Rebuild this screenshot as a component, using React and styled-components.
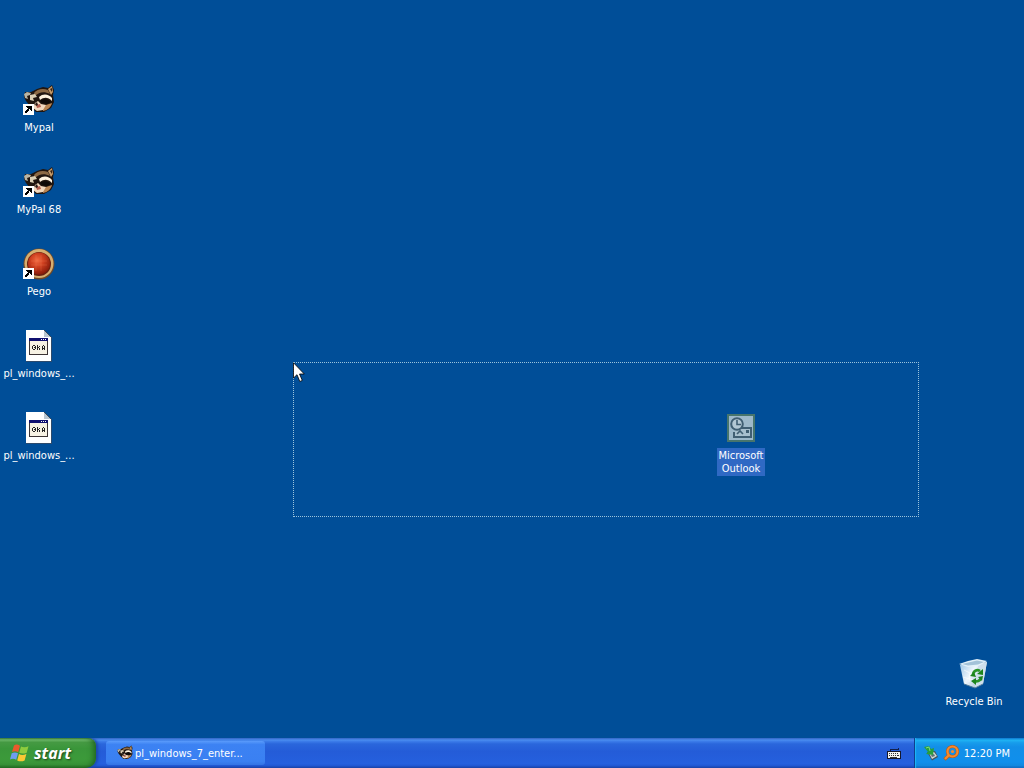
import React from 'react';
import styled, { createGlobalStyle } from 'styled-components';

const shortcuts = [
  { id: 1, label: 'Mypal', icon: Raccoon, linked: true },
  { id: 2, label: 'MyPal 68', icon: Raccoon, linked: true },
  { id: 3, label: 'Pego', icon: RedOrb, linked: true },
  { id: 4, label: 'pl_windows_...', icon: ImageFile },
  { id: 5, label: 'pl_windows_...', icon: ImageFile },
];

function App() {
  return (
    <Screen>
      <GlobalStyle />
      <Desktop>
        <IconColumn>
          {shortcuts.map(({ id, label, icon, linked }) => (
            <DesktopIcon key={id} label={label} icon={icon} linked={linked} />
          ))}
        </IconColumn>
        <OutlookSpot>
          <DesktopIcon label="Microsoft Outlook" icon={Outlook} selected />
        </OutlookSpot>
        <BinSpot>
          <DesktopIcon label="Recycle Bin" icon={RecycleBin} />
        </BinSpot>
        <Marquee />
        <PointerSpot>
          <Pointer />
        </PointerSpot>
      </Desktop>
      <Taskbar>
        <StartButton type="button">
          <Flag />
          start
        </StartButton>
        <Tasks>
          <TaskButton type="button">
            <Raccoon size={16} />
            pl_windows_7_enter...
          </TaskButton>
        </Tasks>
        <LanguageBar type="button" aria-label="Keyboard">
          <Keyboard />
        </LanguageBar>
        <Tray>
          <SafeRemove />
          <Magnifier />
          <Clock>12:20 PM</Clock>
        </Tray>
      </Taskbar>
    </Screen>
  );
}

function DesktopIcon({ label, icon: Icon, linked, selected }) {
  return (
    <Shortcut type="button">
      <IconBox>
        <Icon />
        {linked && <LinkArrow />}
      </IconBox>
      <Label $selected={selected}>{label}</Label>
    </Shortcut>
  );
}

function Raccoon({ size = 32 }) {
  return (
    <svg width={size} height={size} viewBox="0 0 32 32" aria-hidden="true">
      <path d="M1 13 L2 8 L8 8 L14 5 L20 3 L25 4 L29 1 L31 6 L30 11 L31 18 L28 24 L21 28 L13 28 L7 22 L3 17 Z" fill="#20150f" />
      <path d="M11 9 C14 5 20 4 25 6 L27 10 C21 7 16 8 12 12 Z" fill="#8d6a45" />
      <path d="M25 5 L29 2 L30 8 L28 11 Z" fill="#c79b68" />
      <path d="M27 5 L29 4 L29 8 Z" fill="#3a2416" />
      <path d="M1 10 L4 8 L8 9 L7 11 L4 12 L5 15 L2 14 Z" fill="#b9b4a4" />
      <path d="M7 11 L12 10 L14 13 L10 14 L11 17 L7 16 Z" fill="#dccfb4" />
      <path d="M16 13 C20 9 26 10 29 14 L29 17 C25 13 21 13 17 16 Z" fill="#fff3df" />
      <path d="M17 17 C21 14 26 15 28 18 L24 20 L19 19 Z" fill="#0d0907" />
      <path d="M20 22 L29 19 C28 23 25 26 20 27 Z" fill="#b88554" />
      <path d="M12 19 L15 17 L18 20 L23 21 L20 26 L14 27 L10 24 Z" fill="#f1d8bd" />
      <path d="M13 21 L17 20 L18 23 L14 24 Z" fill="#b55f50" />
      <path d="M12 20 L14 18 L15 21 L13 22 Z" fill="#2b1712" />
    </svg>
  );
}

function RedOrb() {
  return (
    <svg width="32" height="32" viewBox="0 0 32 32" aria-hidden="true">
      <defs>
        <radialGradient id="orb" cx="42%" cy="36%" r="65%">
          <stop offset="0" stopColor="#f26a42" />
          <stop offset="0.45" stopColor="#cf4020" />
          <stop offset="1" stopColor="#8a1c0a" />
        </radialGradient>
      </defs>
      <circle cx="16" cy="16" r="15.5" fill="#6f4a28" />
      <circle cx="16" cy="15.5" r="14.5" fill="#d6ae70" />
      <circle cx="16" cy="16" r="12" fill="#6a2010" />
      <circle cx="16" cy="15.5" r="11" fill="url(#orb)" />
      <path d="M8 13 H24 M8 17 H24 M13 7 V23 M18 7 V23" stroke="#f08058" strokeOpacity="0.25" />
    </svg>
  );
}

function ImageFile() {
  return (
    <svg width="32" height="32" viewBox="0 0 32 32" shapeRendering="crispEdges" aria-hidden="true">
      <path d="M3 0 H21 L28 7 V31 H3 Z" fill="#fff" />
      <path d="M3 31.5 H28.5 V7" fill="none" stroke="#2c4a6c" />
      <path d="M21 0 V7 H28 Z" fill="#b9c6d0" />
      <path d="M21 0 L28 7" stroke="#3a4a58" fill="none" />
      <rect x="6" y="8" width="19" height="17" fill="#3c3435" />
      <rect x="7" y="11" width="17" height="13" fill="#f7f2e4" />
      <rect x="6" y="8" width="19" height="3" fill="#101070" />
      <path d="M18 9h1v1h-1z M20 9h1v1h-1z M22 9h1v1h-1z" fill="#fff" />
      <path d="M10 15h2v1h-2z M9 16h1v3h-1z M12 16h1v3h-1z M10 19h2v1h-2z M11 17h1v1h-1z M14 15h1v5h-1z M15 17h1v1h-1z M16 16h1v1h-1z M16 18h1v2h-1z M20 15h1v1h-1z M19 16h1v4h-1z M21 16h1v4h-1z M20 18h1v1h-1z" fill="#222" />
    </svg>
  );
}

function Outlook() {
  return (
    <svg width="32" height="32" viewBox="0 0 32 32" aria-hidden="true">
      <rect x="2" y="2" width="28" height="28" fill="#47756d" />
      <rect x="4" y="4" width="24" height="24" fill="#9db9ca" />
      <path d="M16 16 H26 V25 H9 V20" fill="#a8c0ce" stroke="#405f73" strokeWidth="2" />
      <circle cx="12" cy="12" r="5.8" fill="#b3c8d4" stroke="#405f73" strokeWidth="2" />
      <path d="M12 8 V12.5 H16 M12 22 L15 19 L18 22" fill="none" stroke="#405f73" strokeWidth="1.6" />
      <rect x="21" y="18" width="3" height="3" fill="#405f73" />
    </svg>
  );
}

function RecycleBin() {
  return (
    <svg width="32" height="32" viewBox="0 0 32 32" aria-hidden="true">
      <defs>
        <linearGradient id="bin" x1="0" x2="1" y1="0" y2="0.6">
          <stop offset="0" stopColor="#9cc5e6" />
          <stop offset="0.5" stopColor="#eef6fc" />
          <stop offset="1" stopColor="#9db9d1" />
        </linearGradient>
      </defs>
      <path d="M2 7 L29 4 L25 26 L17 30 L6 26 Z" fill="url(#bin)" />
      <path d="M1 6 L10 3 L19 1 L29 3 L21 8 L10 9 Z" fill="#e3f1fa" />
      <path d="M4 6 L19 2.5 L26 4 L20 6.5 L10 7.5 Z" fill="#a3c2d8" />
      <path d="M20 8 L29 4 L25 26 L17 30 Z" fill="#cfdfec" />
      <path d="M6 12 L12 15 L11 24 M5 19 L15 22" stroke="#fff" strokeOpacity="0.6" fill="none" />
      <path d="M6 26 L17 30 L25 26" stroke="#4c7899" fill="none" />
      <g fill="none" stroke="#2a9428" strokeWidth="2.6">
        <path d="M15 17 C15 13 19 11 22 13" />
        <path d="M23 20 C22 23 19 24 16 23" />
      </g>
      <path d="M19 16 L25 11 L25 17 Z M12 18 L16 14 L18 19 Z M18 20 L18 27 L13 23 Z M20 19 L25 18 L24 23 Z" fill="#1c841c" />
    </svg>
  );
}

function LinkArrow() {
  return (
    <Overlay width="11" height="11" viewBox="0 0 11 11" shapeRendering="crispEdges" aria-hidden="true">
      <rect width="11" height="11" fill="#fff" />
      <path d="M4 2h5v5h-1v-1h-1v-1h-1v1h-1v1h-1v2h-2v-2h1v-1h1v-1h1v-1h-1v-1h-1v-1z" fill="#000" />
      <path d="M5 3h3v3h-1v-1h-1v-1h-1z M4 5h2v2h-1v1h-1z" fill="#000" />
    </Overlay>
  );
}

function Pointer() {
  return (
    <svg width="12" height="21" viewBox="0 0 12 21" aria-hidden="true">
      <path d="M0.5 0.8 V16 L4 12.7 L6.8 19.5 L9.3 18.4 L6.5 12 H11.3 Z" fill="#fff" stroke="#000" strokeWidth="0.8" />
    </svg>
  );
}

function Flag() {
  return (
    <svg width="20" height="20" viewBox="0 0 20 20" aria-hidden="true">
      <path d="M4 2.5 C6 1 8 1.5 10 2.8 L8.2 9.2 C6.2 8 4.2 8 2 9 Z" fill="#ea5a2c" />
      <path d="M11 3.4 C13 4.5 15.5 4.6 18.5 3.2 L16.7 9.7 C14 11 11.5 10.8 9.2 9.8 Z" fill="#8dcb3e" />
      <path d="M1.7 10.2 C4 9 6 9.2 8 10.3 L6.2 16.7 C4.2 15.5 2 15.4 0 16.5 Z" fill="#6f9df0" />
      <path d="M9 11 C11 12.2 13.5 12.3 16.4 11 L14.6 17.4 C12 18.7 9.5 18.6 7.2 17.4 Z" fill="#fbc834" />
    </svg>
  );
}

function Keyboard() {
  return (
    <svg width="14" height="12" viewBox="0 0 14 12" shapeRendering="crispEdges" aria-hidden="true">
      <path d="M3 2h8v-1h1v2h-8v1h-1z" fill="#12204a" />
      <rect x="0" y="4" width="14" height="8" fill="#15182c" />
      <rect x="1" y="5" width="12" height="6" fill="#f3f3f0" />
      <path d="M2 6h1v1h-1z M4 6h1v1h-1z M6 6h1v1h-1z M8 6h1v1h-1z M10 6h1v1h-1z M2 8h1v1h-1z M4 8h1v1h-1z M6 8h1v1h-1z M8 8h1v1h-1z M10 8h2v1h-2z M3 10h7v1h-7z" fill="#333" />
    </svg>
  );
}

function SafeRemove() {
  return (
    <svg width="16" height="16" viewBox="0 0 16 16" aria-hidden="true">
      <path d="M4 7 L12 6 L15 12 L9 15.5 Z" fill="#46545c" />
      <path d="M6 8 L11 7 L14 11 L9 14 Z" fill="#d3dbd6" />
      <path d="M8 10 L11 9 L12 11 L9 12 Z" fill="#5d7074" />
      <path d="M1 2 L6 1 L8 4 L11 3 L10 10 L3 9 L5 7 Z" fill="#279f3e" />
      <path d="M3 3 L6 2 L7 6" stroke="#7ddb7c" fill="none" />
    </svg>
  );
}

function Magnifier() {
  return (
    <svg width="16" height="16" viewBox="0 0 16 16" aria-hidden="true">
      <circle cx="9.5" cy="6.5" r="5" fill="none" stroke="#b95a16" strokeWidth="3.2" />
      <path d="M6 10 L1.5 14.5" stroke="#b95a16" strokeWidth="3.4" />
      <circle cx="9.5" cy="6.5" r="5" fill="none" stroke="#f58a2c" strokeWidth="2.2" />
      <path d="M6 10 L2 14" stroke="#f58a2c" strokeWidth="2.4" />
      <circle cx="9.5" cy="6.5" r="1.6" fill="#f58a2c" />
    </svg>
  );
}

const GlobalStyle = createGlobalStyle`
  * {
    box-sizing: border-box;
  }

  body {
    margin: 0;
    font-family: "DejaVu Sans Condensed", "DejaVu Sans", sans-serif;
    font-size: 11px;
    line-height: 13px;
    color: #fff;
  }

  button {
    margin: 0;
    padding: 0;
    border: 0;
    background: none;
    color: inherit;
    font: inherit;
  }

  svg {
    display: block;
    flex: none;
  }
`;

const Screen = styled.div`
  display: flex;
  flex-direction: column;
  height: 100vh;
  overflow: hidden;
`;

const Desktop = styled.main`
  position: relative;
  flex: 1;
  padding-top: 84px;
  background: #004e98;
`;

const IconColumn = styled.div`
  display: flex;
  flex-direction: column;
  align-items: flex-start;
  gap: 31px;
`;

const OutlookSpot = styled.div`
  position: absolute;
  top: 412px;
  left: 702px;
`;

const BinSpot = styled.div`
  position: absolute;
  right: 11px;
  bottom: 29px;
`;

const Shortcut = styled.button`
  display: flex;
  flex-direction: column;
  align-items: center;
  gap: 4px;
  width: 78px;
`;

const IconBox = styled.span`
  position: relative;
`;

const Overlay = styled.svg`
  position: absolute;
  left: 0;
  bottom: 1px;
`;

const Label = styled.span`
  width: ${({ $selected }) => ($selected ? 'min-content' : 'auto')};
  padding: 1px 2px;
  background: ${({ $selected }) => ($selected ? '#2f69c4' : 'none')};
  white-space: ${({ $selected }) => ($selected ? 'normal' : 'nowrap')};
`;

const Marquee = styled.div`
  position: absolute;
  top: 362px;
  left: 293px;
  width: 626px;
  height: 155px;
  border: 1px dotted #9cc4dc;
`;

const PointerSpot = styled.div`
  position: absolute;
  top: 362px;
  left: 293px;
`;

const Taskbar = styled.footer`
  display: flex;
  height: 30px;
  background: linear-gradient(#3165c4 0, #4a8cf0 7%, #3a7ae8 12%, #2a66dc 20%, #245cd8 45%, #2560de 86%, #2158d4 92%, #1941a5 100%);
`;

const StartButton = styled.button`
  display: flex;
  align-items: center;
  gap: 4px;
  width: 96px;
  padding-left: 10px;
  border-radius: 0 8px 10px 0;
  background: linear-gradient(#3a7a3a 0, #6db86a 6%, #459a43 15%, #3a963a 35%, #3c9a3a 70%, #389338 88%, #226b22 100%);
  box-shadow: inset -5px 0 6px -3px #1e5f1e, 2px 0 3px #1c48a8;
  font-family: "Open Sans", "Noto Sans", sans-serif;
  font-size: 16px;
  font-style: italic;
  font-weight: 700;
  line-height: 20px;
  text-shadow: 1px 1px 2px #1a431a;
`;

const Tasks = styled.div`
  display: flex;
  flex: 1;
  align-items: center;
  padding-left: 10px;
`;

const TaskButton = styled.button`
  display: flex;
  align-items: center;
  gap: 2px;
  width: 159px;
  height: 24px;
  padding-left: 11px;
  border-radius: 3px;
  background: linear-gradient(#5a9bfb 0, #3c82f3 15%, #3a80f2 85%, #3474e4 100%);
  white-space: nowrap;
`;

const LanguageBar = styled.button`
  display: flex;
  align-items: center;
  justify-content: center;
  width: 40px;
`;

const Tray = styled.div`
  display: flex;
  align-items: center;
  gap: 4px;
  padding: 0 14px 0 8px;
  border-left: 1px solid #0f3f8e;
  background: linear-gradient(#0c6fca 0, #1fb3f4 7%, #179ceb 16%, #128fe8 30%, #108fec 80%, #1188e0 92%, #0f62ba 100%);
  box-shadow: inset 1px 0 1px #1fb8f6;
`;

const Clock = styled.time`
  padding-left: 1px;
  white-space: nowrap;
`;

export default App;
